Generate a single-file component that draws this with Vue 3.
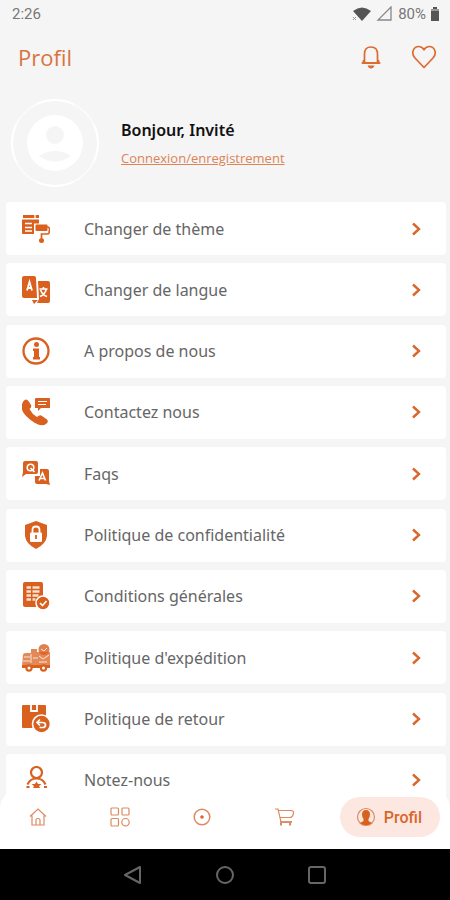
<script setup>
import { ref } from "vue";

const items = [
  { icon: "theme", label: "Changer de thème" },
  { icon: "language", label: "Changer de langue" },
  { icon: "info", label: "A propos de nous" },
  { icon: "contact", label: "Contactez nous" },
  { icon: "faq", label: "Faqs" },
  { icon: "privacy", label: "Politique de confidentialité" },
  { icon: "terms", label: "Conditions générales" },
  { icon: "shipping", label: "Politique d'expédition" },
  { icon: "return", label: "Politique de retour" },
  { icon: "rate", label: "Notez-nous" },
];

const tabs = ["home", "categories", "explore", "cart", "profile"];
const active = ref("profile");
</script>

<template>
  <div class="app">
    <div class="status">
      <span>2:26</span>
      <div class="status-right">
        <svg width="20" height="16" viewBox="0 0 20 16" fill="#555">
          <path d="M1 5 Q10 -2 19 5 L10 15 Z" />
          <path d="M1 11 l3 3 M4 11 l-3 3" stroke="#999" />
        </svg>
        <svg width="16" height="16" viewBox="0 0 16 16">
          <path d="M15 1 V14 H2 Z" fill="none" stroke="#888" stroke-width="1.3" />
        </svg>
        <span class="percent">80%</span>
        <svg width="10" height="16" viewBox="0 0 10 16" fill="#555">
          <path d="M3 1 h4 v2 h2 v12 h-8 v-12 h2 z" />
          <path d="M1 3 h8 v2 h-8 z" fill="#999" />
        </svg>
      </div>
    </div>

    <header class="header">
      <h1>Profil</h1>
      <div class="actions">
        <button aria-label="Notifications">
          <svg width="24" height="26" viewBox="0 0 24 26" fill="none" stroke="#dc6a31" stroke-width="1.7">
            <path d="M5.500 18.5 V10 Q5.500 3 12 3 Q18.500 3 18.500 10 V18.5" />
            <path d="M3.500 19 H20.500" stroke-width="2" stroke-linecap="round" />
            <path d="M4.500 16 v2 M19.500 16 v2" />
            <path d="M8.5 21.5 h7 q-1 3 -3.5 3 t-3.500 -3 z" fill="#dc6a31" stroke="none" />
          </svg>
        </button>
        <button aria-label="Favoris">
          <svg width="26" height="26" viewBox="0 0 26 26" fill="none" stroke="#dc6a31" stroke-width="1.7" stroke-linejoin="round">
            <path d="M13 23.500 L4 14 C-1 8 3.500 2.500 7.500 2.500 C10.500 2.500 12 4 13 5.800 C14 4 15.500 2.500 18.500 2.500 C22.500 2.500 27 8 22 14 Z" />
          </svg>
        </button>
      </div>
    </header>

    <section class="user">
      <svg width="90" height="90" viewBox="0 0 90 90">
        <circle cx="45" cy="45" r="43" fill="none" stroke="#fbfbfb" stroke-width="2" />
        <circle cx="45" cy="45" r="43" fill="none" stroke="#fff" stroke-width="2" stroke-dasharray="38 29.500" stroke-dashoffset="19" />
        <circle cx="45" cy="45" r="28" fill="#fff" />
        <circle cx="45" cy="37" r="9" fill="#f5f5f5" />
        <path d="M29 58 Q45 48 61 58 Q45 69 29 58 Z" fill="#f5f5f5" />
      </svg>
      <div class="user-text">
        <h2>Bonjour, Invité</h2>
        <a href="#">Connexion/enregistrement</a>
      </div>
    </section>

    <main class="list">
      <button v-for="item in items" :key="item.icon" class="card">
        <svg class="icon" width="28" height="28" viewBox="0 0 28 28" fill="#d9601f">
          <g v-if="item.icon === 'theme'">
            <path d="M1 0 h16 v3 h-16 z" />
            <path d="M0 4.500 h17 v4 h-5 v10.500 h-11 q-1 0 -1 -1 z" />
            <path d="M3 8.500 h7 M3 12.500 h7 M3 16 h7 M13 0 v3" stroke="#fff" stroke-width="1.300" />
            <rect x="13.500" y="9.500" width="12" height="6.500" rx="1" />
            <path d="M25 12 q3 0 2.500 3 l-.5 3 q-.3 1 -2 1 h-5.500 v4" fill="none" stroke="#d9601f" stroke-width="1.700" />
            <circle cx="19.500" cy="25.500" r="2.500" />
          </g>
          <g v-else-if="item.icon === 'language'">
            <path d="M2 0 h10 q2 0 2 2 l1 20 h-13 q-2 0 -2 -2 v-18 q0 -2 2 -2 z" />
            <path d="M16 5 h10 q2 0 2 2 v18 q0 2 -2 2 h-11 l2 -4 z" />
            <path d="M10 24 h6 l-4 4 z" />
            <path d="M5 14.500 L7.500 6 L10 14.500 M6 12 h3.500" fill="none" stroke="#fff" stroke-width="1.800" />
            <path d="M17.500 13 h8 M21.500 11 v2 M24.500 13 q-2 6 -6.500 7.500 M18.500 14 q2 5 6.500 6.500" fill="none" stroke="#fff" stroke-width="1.600" />
          </g>
          <g v-else-if="item.icon === 'info'">
            <circle cx="14" cy="14" r="12.500" fill="none" stroke="#d9601f" stroke-width="2.300" />
            <circle cx="14.500" cy="7.500" r="2.500" />
            <path d="M11 11.500 h6 v8.500 h1 v2.500 h-7 v-2.500 h1 v-6 h-1 z" />
          </g>
          <g v-else-if="item.icon === 'contact'">
            <path d="M1.500 3 Q4 0 6.500 3 L9 7 Q10 9 7.500 11 Q10 16 15 19 Q18 16 20 18 L25 21.500 Q27 24 24 26 Q20 29 13 25 Q-3 15 0 6 Z" />
            <path d="M14 0 h13 q1 0 1 1 v9 h-9 l-3 3 v-3 h-3 v-9 q0 -1 1 -1 z" />
            <path d="M16 3.500 h9 M16 6.500 h8" stroke="#fff" stroke-width="1.200" />
          </g>
          <g v-else-if="item.icon === 'faq'">
            <path d="M3 1 h11 q2 0 2 2 v9 q0 2 -2 2 h-10 l-4 3 l1 -5 v-9 q0 -2 2 -2 z" />
            <path d="M18 9 h7 q2 0 2 2 v10 l1 4 l-4 -1 h-9 q-2 0 -2 -2 v-6 h5 z" />
            <circle cx="8.500" cy="7.500" r="3.300" fill="none" stroke="#fff" stroke-width="1.600" />
            <path d="M8.500 8 l4 4 M17 20.500 L20.500 13 L23.500 20.500 M18 18.500 h5" fill="none" stroke="#fff" stroke-width="1.600" />
          </g>
          <g v-else-if="item.icon === 'privacy'">
            <path d="M14 0 L25 4 V15 Q24 23 14 28 Q4 23 3 15 V4 Z" />
            <path d="M10.500 13 V9 Q10.500 5.500 14 5.500 Q17.500 5.500 17.500 9 V13" fill="none" stroke="#fff" stroke-width="1.800" />
            <rect x="8" y="11.500" width="12" height="9.500" rx="1" fill="#fff" />
            <path d="M14 14 v4" stroke="#d9601f" stroke-width="1.800" />
          </g>
          <g v-else-if="item.icon === 'terms'">
            <rect x="1" y="0" width="20" height="25" rx="2" />
            <path d="M4.500 5.500 h4.500 M10.500 5.500 h7 M4.500 9.500 h4.500 M10.500 9.500 h7 M4.500 13.500 h4.500 M10.500 13.500 h6 M4.500 17.500 h4.500 M10.500 17.500 h3" stroke="#fff" stroke-width="2.500" opacity="0.800" />
            <circle cx="21" cy="21" r="7" stroke="#fff" stroke-width="1.500" />
            <path d="M18 21 l2.500 2.500 l4 -4.500" fill="none" stroke="#fff" stroke-width="1.600" />
          </g>
          <g v-else-if="item.icon === 'shipping'">
            <path d="M1 11 Q1 9 4 9 H9 V5 H15 V22 H0 Z" opacity="0.750" />
            <circle cx="22" cy="5.500" r="5.500" opacity="0.800" />
            <path d="M15 8 h13 v15 h-13 z" opacity="0.750" />
            <path d="M0 21 h28 v3 h-28 z" />
            <circle cx="7" cy="24" r="3.700" />
            <circle cx="21.500" cy="24" r="3.700" />
            <path d="M2 13 h6 M9 10 v9 M1 17 h7 M11 14 h5 M17 12 l4 3 l6 -4 M17 18 h8 M19 5 l3 2 l3 -3" fill="none" stroke="#fff" stroke-width="1" opacity="0.800" />
            <circle cx="7" cy="24" r="1.500" fill="#fff" />
            <circle cx="21.500" cy="24" r="1.500" fill="#fff" />
          </g>
          <g v-else-if="item.icon === 'return'">
            <path d="M1 0 h22 q1 0 1 1 v22 h-23 q-1 0 -1 -1 v-21 q0 -1 1 -1 z" />
            <path d="M9 0 v6 h6 v-6" fill="none" stroke="#fff" stroke-width="1.800" />
            <circle cx="19.500" cy="19" r="9" stroke="#fff" stroke-width="1.600" />
            <path d="M18 14.500 l-3 3 l3 3 M15.500 17.500 h5 q3 0 3 2.500 q0 2.500 -3 2.500 h-3" fill="none" stroke="#fff" stroke-width="1.700" />
          </g>
          <g v-else>
            <circle cx="14.500" cy="6.500" r="5.500" fill="none" stroke="#d9601f" stroke-width="2.200" />
            <path d="M5.500 18.500 Q8 12.500 14.500 12.500 Q21 12.500 23.500 18.500" fill="none" stroke="#d9601f" stroke-width="2.200" />
            <path d="M14.500 15.500 l1.500 2.500 h3.500 l-2.500 2 l1 2 h-7 l1 -2 l-2.500 -2 h3.500 z" />
            <path d="M4.500 20 h3 v2 h-3 z M22 20 h3 v2 h-3 z" />
          </g>
        </svg>
        <span class="label">{{ item.label }}</span>
        <svg width="10" height="14" viewBox="0 0 10 14">
          <path d="M2 1.500 L8 7 L2 12.500" fill="none" stroke="#d9662b" stroke-width="2.400" />
        </svg>
      </button>
    </main>

    <nav class="tabs">
      <button
        v-for="tab in tabs"
        :key="tab"
        class="tab"
        :class="{ active: active === tab }"
        :aria-label="tab"
        @click="active = tab"
      >
        <svg width="20" height="20" viewBox="0 0 20 20" fill="none" stroke="#dd8a60" stroke-width="1.200">
          <g v-if="tab === 'home'">
            <path d="M2 9.500 L10 2 L18 9.500 M4 8.500 V18 H16 V8.500" />
            <path d="M8 18 v-5 q0 -1.500 2 -1.500 t2 1.500 v5" />
          </g>
          <g v-else-if="tab === 'categories'">
            <rect x="1" y="1" width="7.500" height="7" rx="1" />
            <rect x="12" y="1" width="7" height="7" rx="1" />
            <rect x="1" y="11.500" width="7.500" height="7.500" rx="1" />
            <circle cx="15.500" cy="15.200" r="3.700" />
          </g>
          <g v-else-if="tab === 'explore'">
            <circle cx="10" cy="10" r="7.800" stroke-width="1.500" />
            <circle cx="10" cy="10" r="1.800" fill="#d9662b" stroke="none" />
          </g>
          <g v-else-if="tab === 'cart'">
            <path d="M1 2 h3 l3 13 h11 M4.500 3.500 h12 q3.500 0 3 3 q-1 4 -3.500 4 h-9.500" />
            <path d="M6 15 h12" stroke-width="1.800" />
            <path d="M7 16 v2.500 M16 16 v2.500" stroke-width="2" />
          </g>
          <g v-else>
            <circle cx="10" cy="10" r="8.500" />
            <path d="M10 3 q4 0 4 4.500 q0 2.500 -1.500 4.500 v2 l3.500 2 q-6 4.500 -12 0 l3.500 -2 v-2 q-1.500 -2 -1.500 -4.500 q0 -4.500 4 -4.500 z" fill="#d9601f" stroke="none" />
          </g>
        </svg>
        <span v-if="active === tab">Profil</span>
      </button>
    </nav>

    <div class="system">
      <button aria-label="Retour">
        <svg width="20" height="20" viewBox="0 0 20 20"><path d="M17 2 V18 L2 10 Z" /></svg>
      </button>
      <button aria-label="Accueil">
        <svg width="20" height="20" viewBox="0 0 20 20"><circle cx="10" cy="10" r="8" /></svg>
      </button>
      <button aria-label="Applications">
        <svg width="20" height="20" viewBox="0 0 20 20"><rect x="2" y="2" width="16" height="16" rx="2" /></svg>
      </button>
    </div>
  </div>
</template>

<style>
body {
  margin: 0;
  background: #f5f5f5;
}
</style>

<style scoped>
.app {
  min-height: 100vh;
  display: flex;
  flex-direction: column;
  background: #f5f5f5;
  font-family: "Noto Sans", "Open Sans", sans-serif;
}

button {
  font: inherit;
  border: none;
  background: none;
  padding: 0;
  cursor: pointer;
}

svg {
  display: block;
  flex: none;
}

.status {
  height: 28px;
  padding: 0 10px 0 12px;
  display: flex;
  align-items: center;
  justify-content: space-between;
  font-family: Roboto, sans-serif;
  font-size: 15px;
  color: #777;
}

.status-right {
  display: flex;
  align-items: center;
  gap: 4px;
}

.percent {
  margin-left: 2px;
}

.header {
  height: 58px;
  padding: 0 13px 0 18px;
  display: flex;
  align-items: center;
  justify-content: space-between;
}

.header h1 {
  margin: 0;
  font-family: "Open Sans", sans-serif;
  font-size: 22px;
  line-height: 32px;
  font-weight: 400;
  color: #d9743f;
}

.actions {
  display: flex;
  align-items: center;
  gap: 28px;
}

.user {
  height: 114px;
  padding: 0 0 2px 10px;
  display: flex;
  align-items: center;
  gap: 21px;
}

.user-text {
  display: flex;
  flex-direction: column;
  gap: 8px;
}

.user h2 {
  margin: 0;
  font-size: 16px;
  line-height: 22px;
  font-weight: 600;
  color: #111;
}

.user a {
  font-family: "Open Sans", sans-serif;
  font-size: 13px;
  line-height: 18px;
  color: #dd8358;
}

.list {
  flex: 1;
  padding: 0 4px 0 6px;
  display: flex;
  flex-direction: column;
  justify-content: space-between;
  gap: 8px;
}

.card {
  height: 53px;
  padding: 0 25px 0 16px;
  display: flex;
  align-items: center;
  background: #fff;
  border-radius: 4px;
  text-align: left;
}

.label {
  flex: 1;
  margin-left: 34px;
  font-size: 16px;
  line-height: 22px;
  color: #666;
}

.tabs {
  position: relative;
  height: 60px;
  box-sizing: border-box;
  margin-top: -18px;
  padding: 0 10px 4px 12px;
  display: flex;
  align-items: center;
  justify-content: space-between;
  background: #fff;
  border-radius: 20px 20px 0 0;
}

.tab {
  padding: 0 16px;
}

.tab.active {
  height: 40px;
  padding: 0 18px 0 16px;
  display: flex;
  align-items: center;
  gap: 8px;
  border-radius: 20px;
  background: #fce8e0;
  color: #d9662b;
  font-family: Roboto, sans-serif;
  font-size: 16px;
  font-weight: 500;
}

.system {
  height: 51px;
  display: flex;
  align-items: center;
  justify-content: center;
  gap: 72px;
  background: #000;
}

.system svg {
  fill: none;
  stroke: #666;
  stroke-width: 2;
  stroke-linejoin: round;
}
</style>
